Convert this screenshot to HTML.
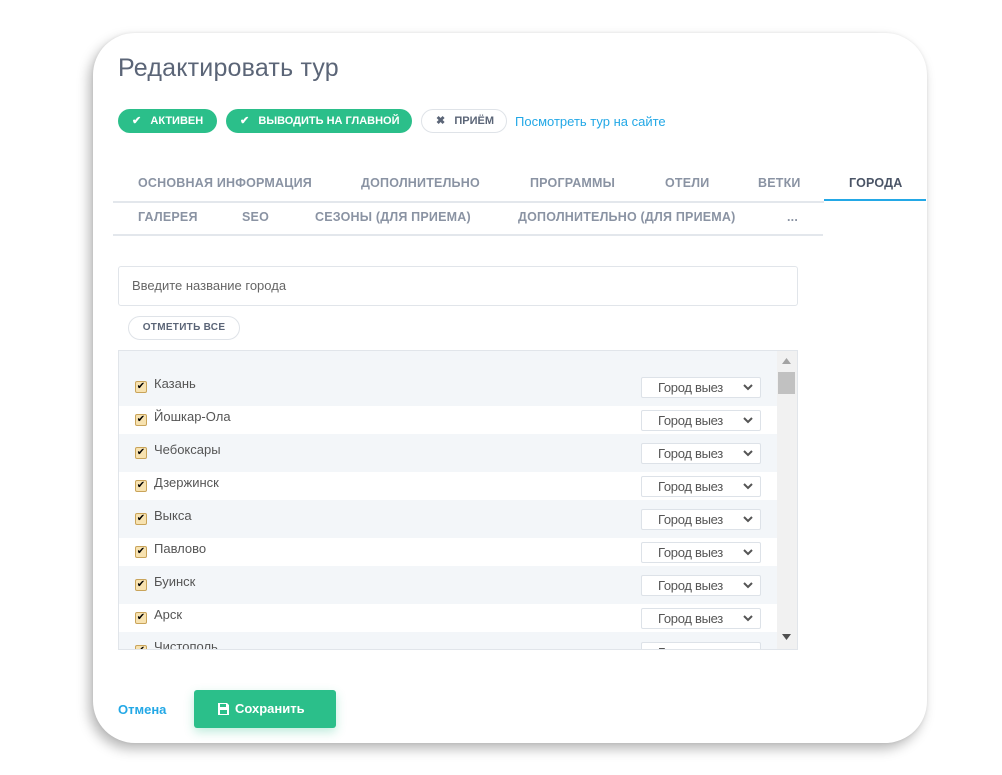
<!DOCTYPE html>
<html><head><meta charset="utf-8"><style>
*{box-sizing:border-box;margin:0;padding:0}
body{width:1002px;height:775px;background:#fff;position:relative;overflow:hidden;font-family:"Liberation Sans",sans-serif}
.card{position:absolute;left:93px;top:33px;width:834px;height:710px;background:#fff;border-radius:42px;box-shadow:-4px 6px 12px rgba(0,0,0,.28),0 0 3px rgba(0,0,0,.08)}
.a{position:absolute;white-space:nowrap}
h1{position:absolute;left:118px;top:54px;font-weight:normal;font-size:25px;color:#5b6577;letter-spacing:.2px}
.pill{position:absolute;top:109px;height:24px;border-radius:12px;font-size:11px;font-weight:bold;line-height:24px;color:#fff;background:#2bbf8a;padding-left:14px}
.tab{position:absolute;font-size:12.5px;font-weight:bold;color:#8a93a3;letter-spacing:.2px}
.row{position:absolute;left:119px;width:658px}
.cb{position:absolute;left:135px;width:12px;height:12px;border:1px solid #c9a45a;background:#f7e2b0;border-radius:2px;font-size:10px;line-height:10px;text-align:center;color:#000}
.nm{position:absolute;left:154px;font-size:13px;color:#555}
.sel{position:absolute;left:641px;width:120px;height:21px;background:#fff;border:1px solid #dde2e8;border-radius:2px;font-size:13px;color:#555;line-height:19px;padding-left:16px;overflow:hidden;letter-spacing:-.3px}
.sel svg{position:absolute;right:7px;top:6px}
</style></head><body>
<div class="card"></div>
<h1>Редактировать тур</h1>
<div class="pill" style="left:118px;width:99px">✔&nbsp;&nbsp; АКТИВЕН</div>
<div class="pill" style="left:226px;width:186px">✔&nbsp;&nbsp; ВЫВОДИТЬ НА ГЛАВНОЙ</div>
<div class="pill" style="left:421px;width:86px;background:#fff;border:1px solid #dfe3e8;color:#5b6577;line-height:22px">✖&nbsp;&nbsp; ПРИЁМ</div>
<div class="a" style="left:515px;top:114px;font-size:13px;color:#23a8e6">Посмотреть тур на сайте</div>

<div class="tab a" style="left:138px;top:176px">ОСНОВНАЯ ИНФОРМАЦИЯ</div>
<div class="tab a" style="left:361px;top:176px">ДОПОЛНИТЕЛЬНО</div>
<div class="tab a" style="left:530px;top:176px">ПРОГРАММЫ</div>
<div class="tab a" style="left:665px;top:176px">ОТЕЛИ</div>
<div class="tab a" style="left:758px;top:176px">ВЕТКИ</div>
<div class="tab a" style="left:849px;top:176px;color:#4a5466">ГОРОДА</div>
<div class="a" style="left:113px;top:201px;width:711px;height:2px;background:#e3e7ec"></div>
<div class="a" style="left:824px;top:199px;width:102px;height:2px;background:#23a8e6"></div>
<div class="tab a" style="left:138px;top:210px">ГАЛЕРЕЯ</div>
<div class="tab a" style="left:242px;top:210px">SEO</div>
<div class="tab a" style="left:315px;top:210px">СЕЗОНЫ (ДЛЯ ПРИЕМА)</div>
<div class="tab a" style="left:518px;top:210px">ДОПОЛНИТЕЛЬНО (ДЛЯ ПРИЕМА)</div>
<div class="tab a" style="left:787px;top:210px">...</div>
<div class="a" style="left:113px;top:234px;width:710px;height:2px;background:#e3e7ec"></div>

<div class="a" style="left:118px;top:266px;width:680px;height:40px;border:1px solid #e1e5ea;border-radius:3px;font-size:13px;color:#666;line-height:38px;padding-left:13px">Введите название города</div>
<div class="a" style="left:128px;top:316px;width:112px;height:24px;border:1px solid #dfe3e8;border-radius:12px;font-size:10px;font-weight:bold;color:#5b6577;line-height:22px;text-align:center;letter-spacing:.3px">ОТМЕТИТЬ ВСЕ</div>

<div class="a" style="left:118px;top:350px;width:680px;height:300px;border:1px solid #e1e5ea;overflow:hidden;background:#f3f6f9">
</div>
<div class="row" style="top:406px;height:28px;background:#fff"></div>
<div class="row" style="top:472px;height:28px;background:#fff"></div>
<div class="row" style="top:538px;height:28px;background:#fff"></div>
<div class="row" style="top:604px;height:28px;background:#fff"></div>

<div class="cb" style="top:381px">✔</div><div class="nm" style="top:376px">Казань</div>
<div class="cb" style="top:414px">✔</div><div class="nm" style="top:409px">Йошкар-Ола</div>
<div class="cb" style="top:447px">✔</div><div class="nm" style="top:442px">Чебоксары</div>
<div class="cb" style="top:480px">✔</div><div class="nm" style="top:475px">Дзержинск</div>
<div class="cb" style="top:513px">✔</div><div class="nm" style="top:508px">Выкса</div>
<div class="cb" style="top:546px">✔</div><div class="nm" style="top:541px">Павлово</div>
<div class="cb" style="top:579px">✔</div><div class="nm" style="top:574px">Буинск</div>
<div class="cb" style="top:612px">✔</div><div class="nm" style="top:607px">Арск</div>
<div class="a" style="left:119px;top:632px;width:658px;height:17px;overflow:hidden">
 <div class="cb" style="left:16px;top:13px">✔</div><div class="nm" style="left:35px;top:7px">Чистополь</div>
 <div class="sel" style="left:522px;top:10px">Город выез</div>
</div>

<div class="sel" style="top:377px">Город выез<svg width="10" height="7"><path d="M1 1l4 4 4-4" stroke="#555" stroke-width="2" fill="none"/></svg></div>
<div class="sel" style="top:410px">Город выез<svg width="10" height="7"><path d="M1 1l4 4 4-4" stroke="#555" stroke-width="2" fill="none"/></svg></div>
<div class="sel" style="top:443px">Город выез<svg width="10" height="7"><path d="M1 1l4 4 4-4" stroke="#555" stroke-width="2" fill="none"/></svg></div>
<div class="sel" style="top:476px">Город выез<svg width="10" height="7"><path d="M1 1l4 4 4-4" stroke="#555" stroke-width="2" fill="none"/></svg></div>
<div class="sel" style="top:509px">Город выез<svg width="10" height="7"><path d="M1 1l4 4 4-4" stroke="#555" stroke-width="2" fill="none"/></svg></div>
<div class="sel" style="top:542px">Город выез<svg width="10" height="7"><path d="M1 1l4 4 4-4" stroke="#555" stroke-width="2" fill="none"/></svg></div>
<div class="sel" style="top:575px">Город выез<svg width="10" height="7"><path d="M1 1l4 4 4-4" stroke="#555" stroke-width="2" fill="none"/></svg></div>
<div class="sel" style="top:608px">Город выез<svg width="10" height="7"><path d="M1 1l4 4 4-4" stroke="#555" stroke-width="2" fill="none"/></svg></div>

<div class="a" style="left:777px;top:351px;width:20px;height:298px;background:#f1f1f1"></div>
<div class="a" style="left:778px;top:372px;width:17px;height:22px;background:#c1c1c1"></div>
<svg class="a" style="left:782px;top:358px" width="9" height="6"><path d="M0 6L4.5 0 9 6z" fill="#a3a3a3"/></svg>
<svg class="a" style="left:782px;top:634px" width="9" height="6"><path d="M0 0L4.5 6 9 0z" fill="#505050"/></svg>

<div class="a" style="left:118px;top:702px;font-size:13px;font-weight:bold;color:#23a8e6">Отмена</div>
<div class="a" style="left:194px;top:690px;width:142px;height:38px;background:#2bbf8a;border-radius:3px;box-shadow:0 4px 10px rgba(43,191,138,.3);color:#fff;font-size:13px;font-weight:bold;line-height:38px;padding-left:24px">
<svg style="vertical-align:-2px;margin-right:6px" width="11" height="12" viewBox="0 0 11 12"><path d="M0 0h9l2 2v10H0z" fill="#fff"/><rect x="2" y="1" width="6" height="3" fill="#2bbf8a"/><rect x="2" y="7" width="7" height="4" fill="#2bbf8a"/></svg>Сохранить</div>
</body></html>
